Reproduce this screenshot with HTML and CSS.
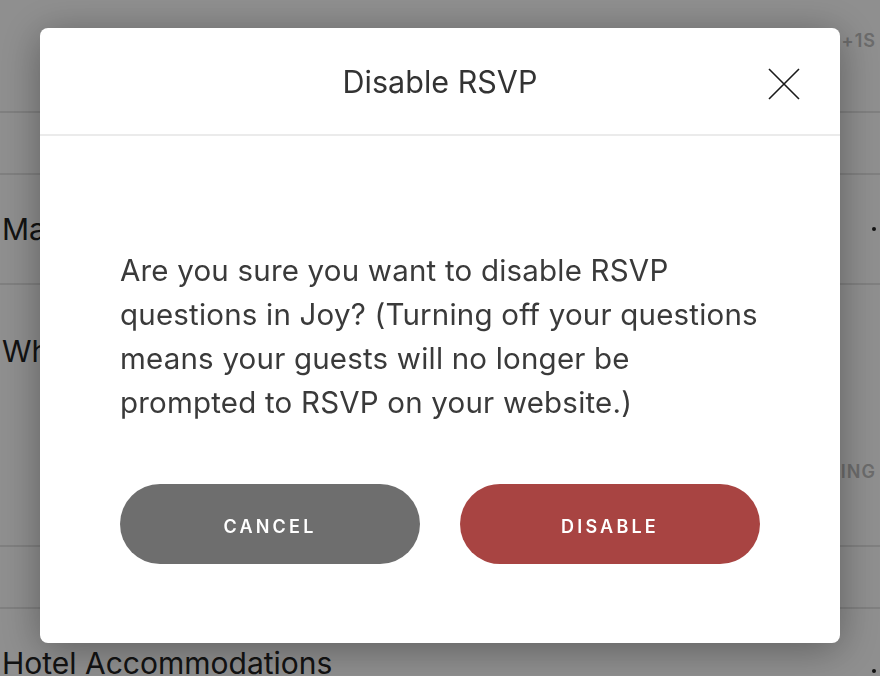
FILE: index.html
```html
<!DOCTYPE html>
<html lang="en">
<head>
  <meta charset="UTF-8" />
  <meta name="viewport" content="width=device-width, initial-scale=1.0"/>
  <title>Disable RSVP</title>
  <link rel="stylesheet" href="styles.css">
</head>
<body>
  <div class="page">
    <div class="row row-top"><span class="row-meta">+1S</span></div>
    <div class="row row-thin"></div>
    <div class="row row-mid"><span class="row-title">Main Questions</span><span class="row-dot"></span></div>
    <div class="row row-tall">
      <span class="row-title">Who is coming?</span>
      <span class="row-meta row-meta-low">ING</span>
    </div>
    <div class="row row-thin"></div>
    <div class="row row-last"><span class="row-title">Hotel Accommodations</span><span class="row-dot"></span></div>
  </div>

  <div class="overlay">
    <div class="modal">
      <div class="modal-header">
        <h2>Disable RSVP</h2>
        <button class="close-btn" aria-label="Close">
          <svg width="32" height="32" viewBox="0 0 32 32">
            <path d="M1 1 L31 31 M31 1 L1 31" stroke="#1a1a1a" stroke-width="1.6" fill="none"/>
          </svg>
        </button>
      </div>
      <div class="modal-body">
        <p>Are you sure you want to disable RSVP questions in Joy? (Turning off your questions means your guests will no longer be prompted to RSVP on your website.)</p>
        <div class="actions">
          <button class="btn btn-cancel">Cancel</button>
          <button class="btn btn-disable">Disable</button>
        </div>
      </div>
    </div>
  </div>
</body>
</html>
```

FILE: styles.css
```css
body {
  margin: 0;
  font-family: 'Inter', 'Noto Sans', sans-serif;
  background-color: #fff;
  overflow: hidden;
  height: 676px;
}
.page {
  width: 880px;
}
.row {
  display: flex;
  align-items: center;
  justify-content: space-between;
  border-bottom: 2px solid #e4e4e4;
  padding: 0 4px 0 2px;
  box-sizing: border-box;
}
.row-top {
  height: 113px;
  align-items: flex-start;
  justify-content: flex-end;
  padding-top: 30px;
}
.row-thin {
  height: 62px;
}
.row-mid {
  height: 110px;
}
.row-tall {
  height: 262px;
  align-items: flex-start;
  padding-top: 48px;
  position: relative;
}
.row-last {
  height: 90px;
  align-items: flex-start;
  padding-top: 36px;
  border-bottom: none;
}
.row-title {
  font-size: 30px;
  color: #222;
}
.row-meta {
  font-size: 18px;
  font-weight: 600;
  letter-spacing: 1px;
  color: #c0c0c0;
}
.row-meta-low {
  position: absolute;
  right: 4px;
  top: 176px;
}
.row-dot {
  width: 4px;
  height: 4px;
  border-radius: 50%;
  background-color: #222;
}
.row-last .row-dot {
  margin-top: 24px;
}
.overlay {
  position: fixed;
  inset: 0;
  background-color: rgba(0, 0, 0, 0.44);
}
.modal {
  position: absolute;
  left: 40px;
  top: 28px;
  width: 800px;
  height: 615px;
  background-color: #fff;
  border-radius: 8px;
  box-shadow: 0 6px 40px rgba(0, 0, 0, 0.35);
}
.modal-header {
  height: 106px;
  border-bottom: 2px solid #ebebeb;
  display: flex;
  align-items: center;
  justify-content: center;
  position: relative;
}
.modal-header h2 {
  margin: 0;
  font-size: 30.5px;
  font-weight: 400;
  color: #333;
}
.close-btn {
  position: absolute;
  right: 40px;
  top: 40px;
  width: 32px;
  height: 32px;
  padding: 0;
  border: none;
  background: none;
}
.close-btn svg {
  display: block;
}
.modal-body {
  padding: 112px 80px 0;
}
.modal-body p {
  margin: 0;
  font-size: 29.5px;
  line-height: 44px;
  letter-spacing: 0.2px;
  color: #3a3a3a;
}
.actions {
  display: flex;
  gap: 40px;
  margin-top: 60px;
}
.btn {
  width: 300px;
  height: 80px;
  border: none;
  border-radius: 40px;
  color: #fff;
  font-family: 'Inter', sans-serif;
  font-size: 18px;
  font-weight: 600;
  letter-spacing: 3.2px;
  text-transform: uppercase;
  padding: 4px 0 0;
}
.btn-cancel {
  background-color: #6e6e6e;
}
.btn-disable {
  background-color: #a84442;
}
```
